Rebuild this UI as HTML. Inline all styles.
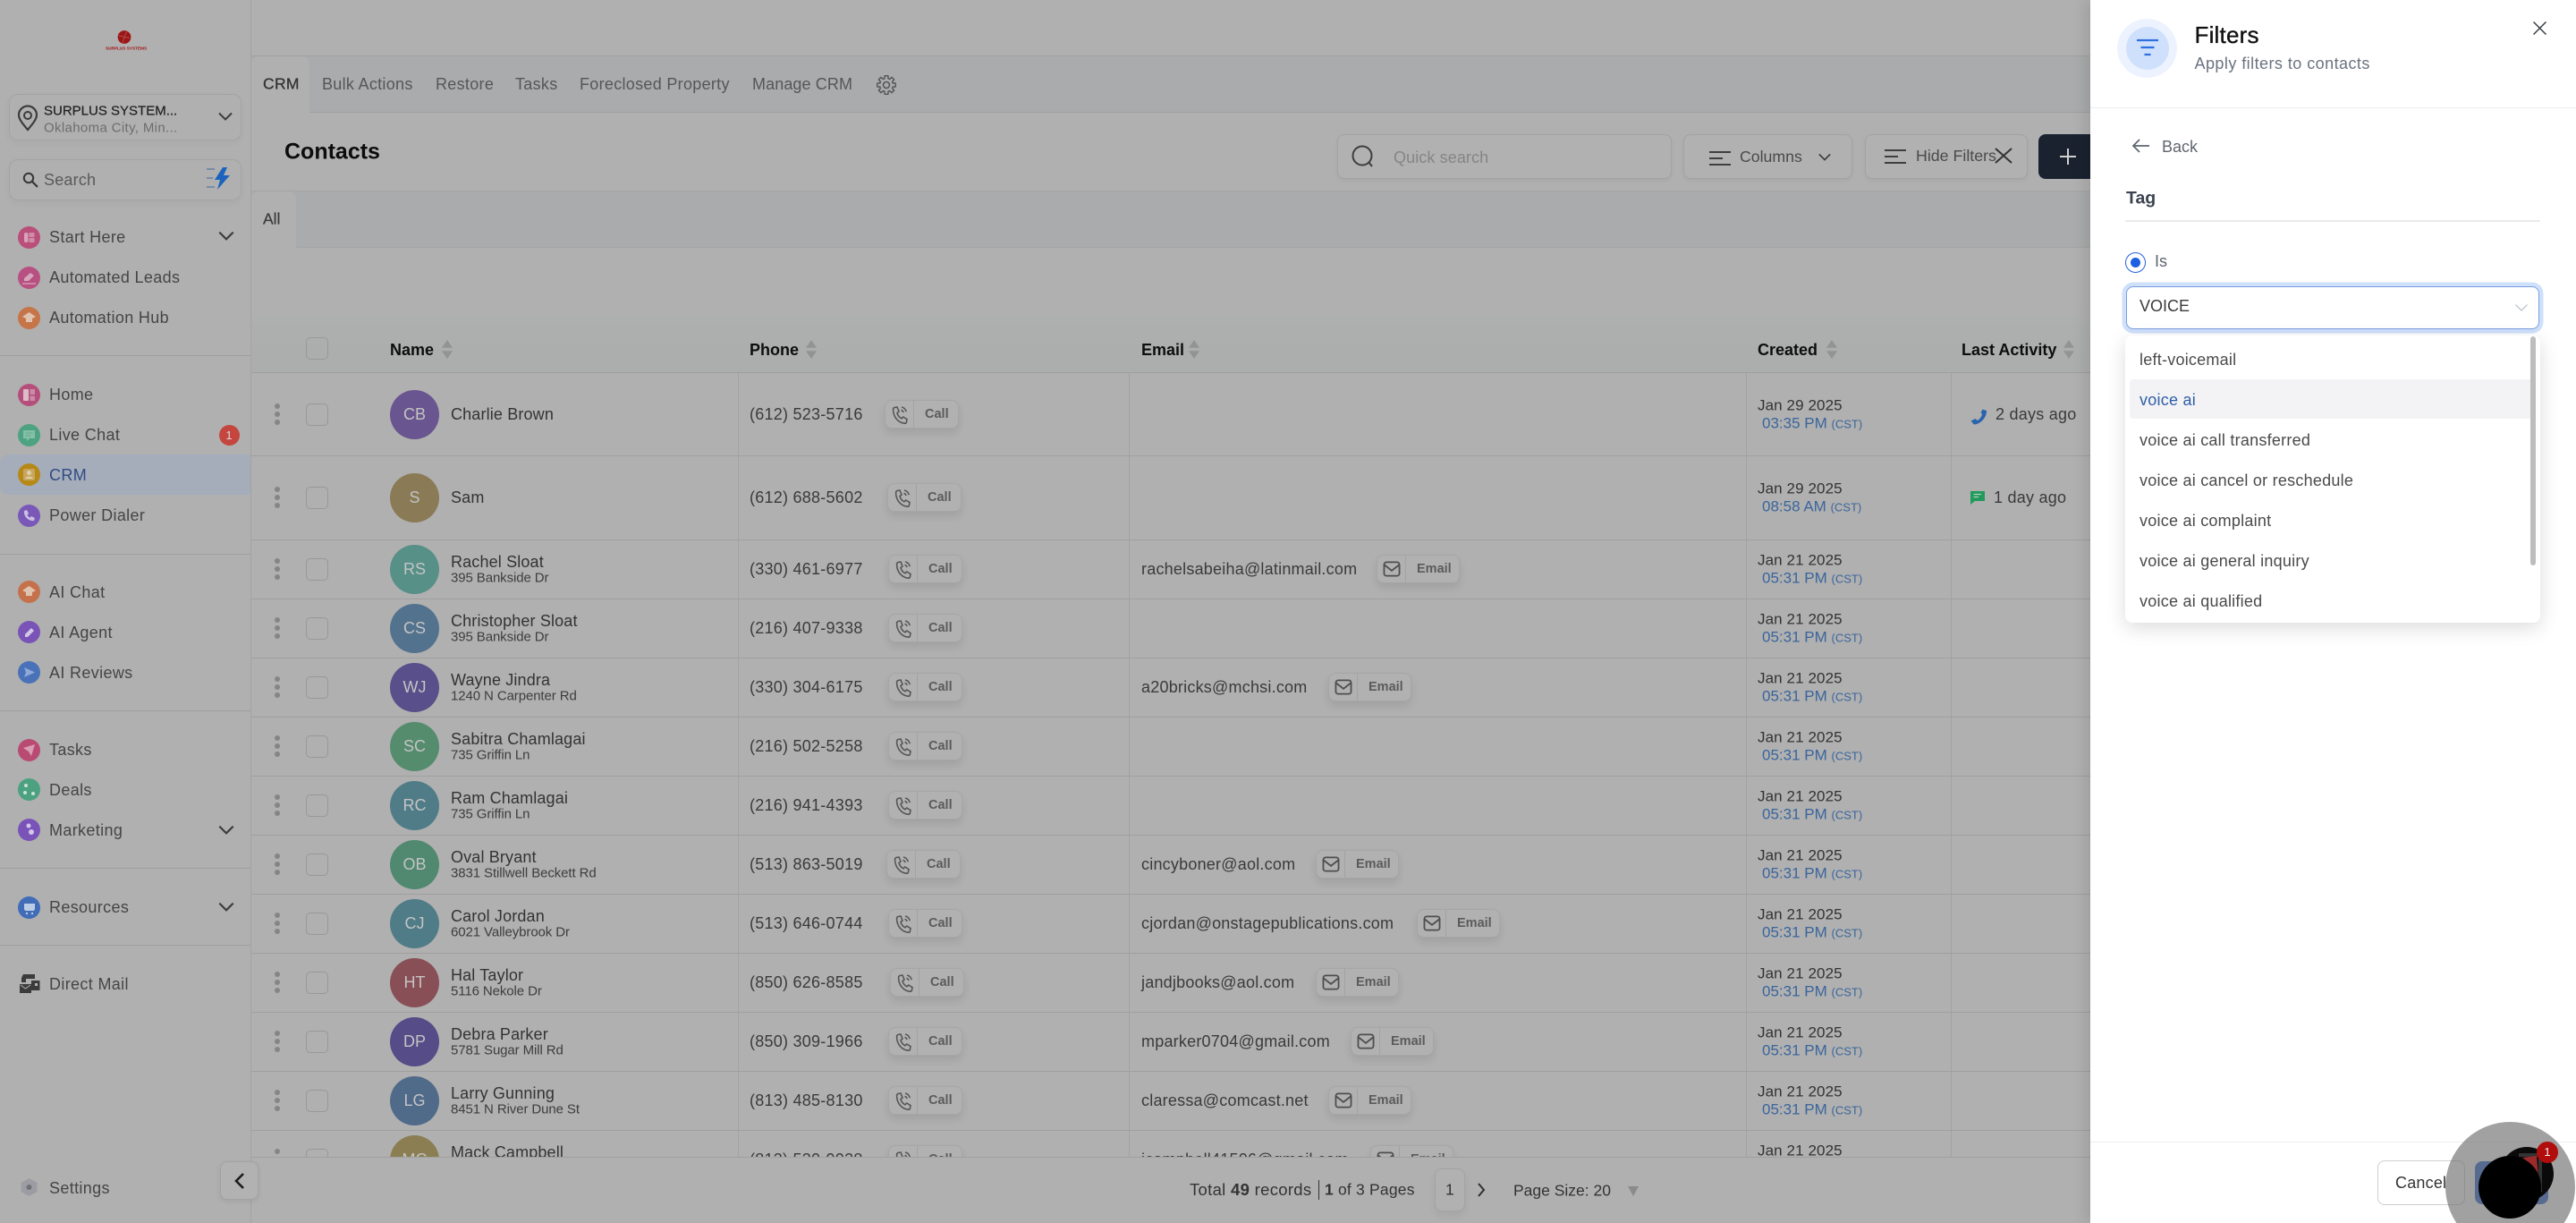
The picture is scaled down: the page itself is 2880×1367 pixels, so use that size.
<!DOCTYPE html>
<html><head><meta charset="utf-8"><title>Contacts</title>
<style>
*{box-sizing:border-box}
html,body{margin:0;padding:0}
body{width:2880px;height:1367px;overflow:hidden;background:#b0b0b0;font-family:"Liberation Sans",sans-serif;position:relative;color:#333}
.a{position:absolute}
.t{position:absolute;white-space:nowrap;transform:translateY(-50%);line-height:1}
.s{font-size:18px;letter-spacing:.35px;color:#454545;left:55px}
.l{position:absolute;background:#9f9f9f;height:1px}
.ic{position:absolute;left:20px;width:25px;height:25px;border-radius:50%;margin-top:-12.5px}
.ic svg{display:block}
.chev{position:absolute;left:244px}
.box{position:absolute;border:1px solid #a3a3a3;border-radius:8px;background:#b1b1b1;box-shadow:0 2px 5px rgba(0,0,0,.05)}
.tab{font-size:18px;letter-spacing:.3px;color:#565656;top:94px}
.h{font-size:18px;font-weight:bold;color:#0d0d0d;top:391px}
.r{position:absolute;left:0;width:2337px;height:0}
.k{position:absolute;left:307px;top:-12px;width:6px;height:6px;border-radius:50%;background:#858585;box-shadow:0 9px 0 #858585,0 18px 0 #858585}
.cb{position:absolute;left:342px;top:-12.5px;width:25px;height:25px;border:1.5px solid #989898;border-radius:5px}
.av{position:absolute;left:436px;top:-27.5px;width:55px;height:55px;border-radius:50%;color:#c4c4c4;font-size:18px;text-align:center;line-height:55px}
.n{left:504px;font-size:18px;letter-spacing:.15px;color:#333;top:0}
.n2{left:504px;font-size:18px;letter-spacing:.15px;color:#333;top:-8.5px}
.ad{left:504px;font-size:15px;letter-spacing:-.1px;color:#3d3d3d;top:10px}
.p{left:838px;font-size:18px;letter-spacing:.25px;color:#3a3a3a;top:0}
.e{left:1276px;font-size:18px;letter-spacing:.22px;color:#3a3a3a;top:0}
.b{position:absolute;height:32px;top:-16px;border:1px solid #a6a6a6;border-radius:8px;background:#b1b1b1;box-shadow:0 5px 9px rgba(0,0,0,.09)}
.b i{position:absolute;top:0;bottom:0;width:1px;background:#a3a3a3}
.b b{position:absolute;top:50%;transform:translateY(-50%);font-size:14.5px;color:#5b5b5b;line-height:1}
.b svg{position:absolute;top:5px;left:6px}
.d{left:1965px;font-size:17px;letter-spacing:.1px;color:#333;top:-10.5px}
.tm{left:1970px;font-size:17px;color:#3a659c;top:10px}
.tm small{font-size:13px}
.o{position:absolute;left:2392px;font-size:18px;letter-spacing:.24px;color:#4a4a4a;white-space:nowrap;transform:translateY(-50%);line-height:1}
</style></head>
<body>
<svg width="0" height="0" style="position:absolute">
<defs>
<symbol id="call" viewBox="0 0 20 22"><path d="M4 2.500 7 2l2 5-2 1.600c.7 2.800 2.500 5 5 6.200l1.700-1.800 4.300 2.600-.6 3.200c-.2 1-1 1.500-2 1.400C8 19.500 2.500 13 2.600 4.500 2.700 3.500 3.200 2.800 4 2.500Z" fill="none" stroke="#565656" stroke-width="1.600"/><path d="M12 2c2.800.6 4.600 2.500 5.200 5.200M11.500 5.400c1.300.4 2.200 1.200 2.600 2.600" fill="none" stroke="#565656" stroke-width="1.500"/></symbol>
<symbol id="mail" viewBox="0 0 22 20"><rect x="1.500" y="1.500" width="19" height="17" rx="3" fill="none" stroke="#4e4e4e" stroke-width="2"/><path d="M2 5l9 7 9-7" fill="none" stroke="#4e4e4e" stroke-width="2"/></symbol>
<symbol id="sort" viewBox="0 0 16 24"><path d="M8 0 15 10H1Z M1 14H15L8 24Z" fill="#939393"/></symbol>
<symbol id="down" viewBox="0 0 16 10"><path d="M1 1.500 8 8.500 15 1.500" fill="none" stroke="#3c3c3c" stroke-width="2"/></symbol>
<symbol id="ham" viewBox="0 0 24 16"><path d="M0 1H24M0 8H15M0 15H24" stroke="#3e3e3e" stroke-width="2" fill="none"/></symbol>
</defs>
</svg>

<!-- main area -->
<div class="a" style="left:280px;top:0;width:1px;height:1367px;background:#a3a3a3"></div>
<div class="a" style="left:281px;top:62px;width:2056px;height:64px;background:#a9abac;border-top:1px solid #a0a0a0;border-bottom:1px solid #a0a0a0"></div>
<div class="a" style="left:281px;top:63px;width:65px;height:63px;background:#b0b0b0;border-radius:8px 8px 0 0"></div>
<div class="t tab" style="left:294px;color:#333;font-size:17.5px;-webkit-text-stroke:.3px #333">CRM</div>
<div class="t tab" style="left:360px">Bulk Actions</div>
<div class="t tab" style="left:487px">Restore</div>
<div class="t tab" style="left:576px">Tasks</div>
<div class="t tab" style="left:648px">Foreclosed Property</div>
<div class="t tab" style="left:841px;letter-spacing:.1px">Manage CRM</div>
<svg class="a" style="left:980px;top:84px" width="22" height="22" viewBox="0 0 22 22"><path d="M9.180.66 12.820.66 13.070 3.790 14.640 4.440 17.020 2.400 19.600 4.980 17.560 7.360 18.210 8.930 21.340 9.180 21.340 12.820 18.210 13.070 17.560 14.640 19.600 17.020 17.020 19.600 14.640 17.560 13.070 18.210 12.820 21.340 9.180 21.340 8.930 18.210 7.360 17.560 4.980 19.600 2.400 17.020 4.440 14.640 3.790 13.070.66 12.820.66 9.180 3.790 8.930 4.440 7.360 2.400 4.980 4.980 2.400 7.360 4.440 8.930 3.790Z" fill="none" stroke="#565656" stroke-width="1.500" stroke-linejoin="round"/><circle cx="11" cy="11" r="3.500" fill="none" stroke="#565656" stroke-width="1.600"/></svg>

<div class="t" style="left:318px;top:169.5px;font-size:25px;font-weight:bold;color:#0c0c0c">Contacts</div>

<div class="box" style="left:1495px;top:150px;width:374px;height:50px"></div>
<svg class="a" style="left:1510px;top:162px" width="27" height="25" viewBox="0 0 27 25"><ellipse cx="13" cy="12" rx="10.500" ry="10.500" fill="none" stroke="#3e3e3e" stroke-width="2"/><path d="M20 19l4 5" stroke="#3e3e3e" stroke-width="2"/></svg>
<div class="t" style="left:1558px;top:176px;font-size:18px;letter-spacing:.1px;color:#858585">Quick search</div>
<div class="box" style="left:1882px;top:150px;width:189px;height:50px"></div>
<svg class="a" style="left:1911px;top:169px" width="24" height="16"><use href="#ham"/></svg>
<div class="t" style="left:1945px;top:176px;font-size:17.700px;color:#4a4a4a">Columns</div>
<svg class="a" style="left:2033px;top:171px" width="14" height="9"><use href="#down"/></svg>
<div class="box" style="left:2085px;top:150px;width:182px;height:50px"></div>
<svg class="a" style="left:2107px;top:167px" width="24" height="16"><use href="#ham"/></svg>
<div class="t" style="left:2142px;top:175px;font-size:17.800px;color:#4a4a4a">Hide Filters</div>
<svg class="a" style="left:2230px;top:165px" width="20" height="18" viewBox="0 0 20 18"><path d="M1 1 19 17M19 1 1 17" stroke="#333" stroke-width="2"/></svg>
<div class="a" style="left:2279px;top:150px;width:70px;height:50px;background:#1a2230;border-radius:8px"></div>
<svg class="a" style="left:2303px;top:166px" width="18" height="18"><path d="M9 0V18M0 9H18" stroke="#d0d0d0" stroke-width="2"/></svg>

<div class="a" style="left:281px;top:213px;width:2056px;height:64px;background:#a9abac;border-top:1px solid #a4a4a4;border-bottom:1px solid #a4a4a4"></div>
<div class="a" style="left:281px;top:214px;width:50px;height:63px;background:#b0b0b0;border-radius:8px 8px 0 0"></div>
<div class="t" style="left:294px;top:245px;font-size:17.5px;color:#3c3c3c;-webkit-text-stroke:.3px #3c3c3c">All</div>

<!-- table header -->
<div class="a" style="left:281px;top:340px;width:2056px;height:77px;background:linear-gradient(#b0b0b0,#adafae 35%,#acaeae)"></div>
<div class="l" style="left:281px;top:416px;width:2056px"></div>
<div class="cb a" style="top:377px"></div>
<div class="t h" style="left:436px">Name</div><svg class="a" style="left:492px;top:380px" width="16" height="21"><use href="#sort"/></svg>
<div class="t h" style="left:838px">Phone</div><svg class="a" style="left:899px;top:380px" width="16" height="21"><use href="#sort"/></svg>
<div class="t h" style="left:1276px">Email</div><svg class="a" style="left:1327px;top:380px" width="16" height="21"><use href="#sort"/></svg>
<div class="t h" style="left:1965px">Created</div><svg class="a" style="left:2040px;top:380px" width="16" height="21"><use href="#sort"/></svg>
<div class="t h" style="left:2193px">Last Activity</div><svg class="a" style="left:2305px;top:380px" width="16" height="21"><use href="#sort"/></svg>

<!-- table body -->
<div class="a" style="left:0;top:0;width:2337px;height:1293px;overflow:hidden">
<div class="a" style="left:825px;top:417px;width:1px;height:876px;background:#a3a3a3"></div>
<div class="a" style="left:1262px;top:417px;width:1px;height:876px;background:#a3a3a3"></div>
<div class="a" style="left:1952px;top:417px;width:1px;height:876px;background:#a3a3a3"></div>
<div class="a" style="left:2181px;top:417px;width:1px;height:876px;background:#a3a3a3"></div>
<div class="l" style="left:281px;width:2056px;top:509px"></div>
<div class="l" style="left:281px;width:2056px;top:603px"></div>
<div class="l" style="left:281px;width:2056px;top:669px"></div>
<div class="l" style="left:281px;width:2056px;top:735px"></div>
<div class="l" style="left:281px;width:2056px;top:801px"></div>
<div class="l" style="left:281px;width:2056px;top:867px"></div>
<div class="l" style="left:281px;width:2056px;top:933px"></div>
<div class="l" style="left:281px;width:2056px;top:999px"></div>
<div class="l" style="left:281px;width:2056px;top:1065px"></div>
<div class="l" style="left:281px;width:2056px;top:1131px"></div>
<div class="l" style="left:281px;width:2056px;top:1197px"></div>
<div class="l" style="left:281px;width:2056px;top:1263px"></div>

<div class="r" style="top:463px"><i class="k"></i><i class="cb"></i><div class="av" style="background:#69558f">CB</div><div class="t n">Charlie Brown</div><div class="t p">(612) 523-5716</div>
<div class="b" style="left:989px;width:83px"><svg width="20" height="22"><use href="#call"/></svg><i style="left:31px"></i><b style="left:44px">Call</b></div>
<div class="t d">Jan 29 2025</div><div class="t tm">03:35 PM <small>(CST)</small></div>
<svg class="a" style="left:2203px;top:-6px" width="19" height="18" viewBox="0 0 19 18"><path d="M13.500.5 18 2c.6 6.500-6 15-14 15.500L.5 13.500 5.500 11l2.200 2c2.500-1.300 4.800-4.300 5.300-7.300l-1.500-1.200Z" fill="#2a64ad"/></svg>
<div class="t" style="left:2231px;top:0;font-size:18px;letter-spacing:.25px;color:#3a3a3a">2 days ago</div></div>

<div class="r" style="top:556px"><i class="k"></i><i class="cb"></i><div class="av" style="background:#8a7a55">S</div><div class="t n">Sam</div><div class="t p">(612) 688-5602</div>
<div class="b" style="left:992px;width:83px"><svg width="20" height="22"><use href="#call"/></svg><i style="left:31px"></i><b style="left:44px">Call</b></div>
<div class="t d">Jan 29 2025</div><div class="t tm">08:58 AM <small>(CST)</small></div>
<svg class="a" style="left:2203px;top:-7px" width="16" height="15" viewBox="0 0 16 15"><path d="M0 0H16V11H5L0 15Z" fill="#219a5b"/><path d="M3.500 3.500H12M3.500 6.500H9" stroke="#b0d0c0" stroke-width="1.300"/></svg>
<div class="t" style="left:2229px;top:0;font-size:18px;letter-spacing:.25px;color:#3a3a3a">1 day ago</div></div>

<div class="r" style="top:636px"><i class="k"></i><i class="cb"></i><div class="av" style="background:#579087">RS</div><div class="t n2">Rachel Sloat</div><div class="t ad">395 Bankside Dr</div><div class="t p">(330) 461-6977</div>
<div class="b" style="left:993px;width:83px"><svg width="20" height="22"><use href="#call"/></svg><i style="left:31px"></i><b style="left:44px">Call</b></div>
<div class="t e">rachelsabeiha@latinmail.com</div>
<div class="b" style="left:1539px;width:93px"><svg width="20" height="18" style="top:6px"><use href="#mail"/></svg><i style="left:31px"></i><b style="left:44px">Email</b></div>
<div class="t d">Jan 21 2025</div><div class="t tm">05:31 PM <small>(CST)</small></div></div>

<div class="r" style="top:702px"><i class="k"></i><i class="cb"></i><div class="av" style="background:#52728d">CS</div><div class="t n2">Christopher Sloat</div><div class="t ad">395 Bankside Dr</div><div class="t p">(216) 407-9338</div>
<div class="b" style="left:993px;width:83px"><svg width="20" height="22"><use href="#call"/></svg><i style="left:31px"></i><b style="left:44px">Call</b></div>
<div class="t d">Jan 21 2025</div><div class="t tm">05:31 PM <small>(CST)</small></div></div>

<div class="r" style="top:768px"><i class="k"></i><i class="cb"></i><div class="av" style="background:#594f8a">WJ</div><div class="t n2">Wayne Jindra</div><div class="t ad">1240 N Carpenter Rd</div><div class="t p">(330) 304-6175</div>
<div class="b" style="left:993px;width:83px"><svg width="20" height="22"><use href="#call"/></svg><i style="left:31px"></i><b style="left:44px">Call</b></div>
<div class="t e">a20bricks@mchsi.com</div>
<div class="b" style="left:1485px;width:93px"><svg width="20" height="18" style="top:6px"><use href="#mail"/></svg><i style="left:31px"></i><b style="left:44px">Email</b></div>
<div class="t d">Jan 21 2025</div><div class="t tm">05:31 PM <small>(CST)</small></div></div>

<div class="r" style="top:834px"><i class="k"></i><i class="cb"></i><div class="av" style="background:#558c6d">SC</div><div class="t n2">Sabitra Chamlagai</div><div class="t ad">735 Griffin Ln</div><div class="t p">(216) 502-5258</div>
<div class="b" style="left:993px;width:83px"><svg width="20" height="22"><use href="#call"/></svg><i style="left:31px"></i><b style="left:44px">Call</b></div>
<div class="t d">Jan 21 2025</div><div class="t tm">05:31 PM <small>(CST)</small></div></div>

<div class="r" style="top:900px"><i class="k"></i><i class="cb"></i><div class="av" style="background:#507c88">RC</div><div class="t n2">Ram Chamlagai</div><div class="t ad">735 Griffin Ln</div><div class="t p">(216) 941-4393</div>
<div class="b" style="left:993px;width:83px"><svg width="20" height="22"><use href="#call"/></svg><i style="left:31px"></i><b style="left:44px">Call</b></div>
<div class="t d">Jan 21 2025</div><div class="t tm">05:31 PM <small>(CST)</small></div></div>

<div class="r" style="top:966px"><i class="k"></i><i class="cb"></i><div class="av" style="background:#508970">OB</div><div class="t n2">Oval Bryant</div><div class="t ad">3831 Stillwell Beckett Rd</div><div class="t p">(513) 863-5019</div>
<div class="b" style="left:991px;width:83px"><svg width="20" height="22"><use href="#call"/></svg><i style="left:31px"></i><b style="left:44px">Call</b></div>
<div class="t e">cincyboner@aol.com</div>
<div class="b" style="left:1471px;width:93px"><svg width="20" height="18" style="top:6px"><use href="#mail"/></svg><i style="left:31px"></i><b style="left:44px">Email</b></div>
<div class="t d">Jan 21 2025</div><div class="t tm">05:31 PM <small>(CST)</small></div></div>

<div class="r" style="top:1032px"><i class="k"></i><i class="cb"></i><div class="av" style="background:#4f7c87">CJ</div><div class="t n2">Carol Jordan</div><div class="t ad">6021 Valleybrook Dr</div><div class="t p">(513) 646-0744</div>
<div class="b" style="left:993px;width:83px"><svg width="20" height="22"><use href="#call"/></svg><i style="left:31px"></i><b style="left:44px">Call</b></div>
<div class="t e">cjordan@onstagepublications.com</div>
<div class="b" style="left:1584px;width:93px"><svg width="20" height="18" style="top:6px"><use href="#mail"/></svg><i style="left:31px"></i><b style="left:44px">Email</b></div>
<div class="t d">Jan 21 2025</div><div class="t tm">05:31 PM <small>(CST)</small></div></div>

<div class="r" style="top:1098px"><i class="k"></i><i class="cb"></i><div class="av" style="background:#884f56">HT</div><div class="t n2">Hal Taylor</div><div class="t ad">5116 Nekole Dr</div><div class="t p">(850) 626-8585</div>
<div class="b" style="left:995px;width:83px"><svg width="20" height="22"><use href="#call"/></svg><i style="left:31px"></i><b style="left:44px">Call</b></div>
<div class="t e">jandjbooks@aol.com</div>
<div class="b" style="left:1471px;width:93px"><svg width="20" height="18" style="top:6px"><use href="#mail"/></svg><i style="left:31px"></i><b style="left:44px">Email</b></div>
<div class="t d">Jan 21 2025</div><div class="t tm">05:31 PM <small>(CST)</small></div></div>

<div class="r" style="top:1164px"><i class="k"></i><i class="cb"></i><div class="av" style="background:#554c88">DP</div><div class="t n2">Debra Parker</div><div class="t ad">5781 Sugar Mill Rd</div><div class="t p">(850) 309-1966</div>
<div class="b" style="left:993px;width:83px"><svg width="20" height="22"><use href="#call"/></svg><i style="left:31px"></i><b style="left:44px">Call</b></div>
<div class="t e">mparker0704@gmail.com</div>
<div class="b" style="left:1510px;width:93px"><svg width="20" height="18" style="top:6px"><use href="#mail"/></svg><i style="left:31px"></i><b style="left:44px">Email</b></div>
<div class="t d">Jan 21 2025</div><div class="t tm">05:31 PM <small>(CST)</small></div></div>

<div class="r" style="top:1230px"><i class="k"></i><i class="cb"></i><div class="av" style="background:#506a89">LG</div><div class="t n2">Larry Gunning</div><div class="t ad">8451 N River Dune St</div><div class="t p">(813) 485-8130</div>
<div class="b" style="left:993px;width:83px"><svg width="20" height="22"><use href="#call"/></svg><i style="left:31px"></i><b style="left:44px">Call</b></div>
<div class="t e">claressa@comcast.net</div>
<div class="b" style="left:1485px;width:93px"><svg width="20" height="18" style="top:6px"><use href="#mail"/></svg><i style="left:31px"></i><b style="left:44px">Email</b></div>
<div class="t d">Jan 21 2025</div><div class="t tm">05:31 PM <small>(CST)</small></div></div>

<div class="r" style="top:1296px"><i class="k"></i><i class="cb"></i><div class="av" style="background:#8a7e52">MC</div><div class="t n2">Mack Campbell</div><div class="t ad">123 Main St</div><div class="t p">(813) 530-9038</div>
<div class="b" style="left:993px;width:83px"><svg width="20" height="22"><use href="#call"/></svg><i style="left:31px"></i><b style="left:44px">Call</b></div>
<div class="t e">jcampbell41506@gmail.com</div>
<div class="b" style="left:1532px;width:93px"><svg width="20" height="18" style="top:6px"><use href="#mail"/></svg><i style="left:31px"></i><b style="left:44px">Email</b></div>
<div class="t d">Jan 21 2025</div><div class="t tm">05:31 PM <small>(CST)</small></div></div>
</div>

<!-- pagination -->
<div class="l" style="left:281px;top:1293px;width:2056px"></div>
<div class="t" style="left:1330px;top:1330px;font-size:18.500px;letter-spacing:.3px;color:#333">Total <b>49</b> records</div>
<div class="a" style="left:1474px;top:1319px;width:1px;height:22px;background:#333"></div>
<div class="t" style="left:1481px;top:1330px;font-size:17.500px;letter-spacing:.2px;color:#333"><b>1</b> of 3 Pages</div>
<div class="box" style="left:1604px;top:1306px;width:34px;height:48px;box-shadow:0 5px 9px rgba(0,0,0,.06)"></div>
<div class="t" style="left:1616px;top:1330px;font-size:17.500px;color:#333">1</div>
<svg class="a" style="left:1651px;top:1322px" width="10" height="16"><path d="M2 1 8 8 2 15" fill="none" stroke="#2f2f2f" stroke-width="2"/></svg>
<div class="t" style="left:1692px;top:1331px;font-size:17.500px;color:#333">Page Size: 20</div>
<svg class="a" style="left:1820px;top:1326px" width="12" height="11"><path d="M0 0H12L6 11Z" fill="#8b8b8b"/></svg>

<!-- sidebar -->
<div class="a" style="left:10px;top:105px;width:260px;height:52px;border:1px solid #a4a4a4;border-radius:10px;box-shadow:0 3px 8px rgba(0,0,0,.04)"></div>
<svg class="a" style="left:19px;top:117px" width="24" height="30" viewBox="0 0 24 30"><path d="M12 28C6 21 2 16 2 11.500A10 10 0 0 1 22 11.500C22 16 18 21 12 28Z" fill="none" stroke="#3c3c3c" stroke-width="2.200"/><circle cx="12" cy="12" r="4" fill="none" stroke="#3c3c3c" stroke-width="2"/></svg>
<div class="t" style="left:49px;top:123.5px;font-size:15px;color:#222;-webkit-text-stroke:.2px #222">SURPLUS SYSTEM...</div>
<div class="t" style="left:49px;top:143px;font-size:15px;letter-spacing:.35px;color:#6d6d6d">Oklahoma City, Min...</div>
<svg class="a" style="left:244px;top:125px" width="16" height="10"><use href="#down"/></svg>
<div class="a" style="left:10px;top:178px;width:260px;height:46px;border:1px solid #a4a4a4;border-radius:10px;box-shadow:0 3px 8px rgba(0,0,0,.04)"></div>
<svg class="a" style="left:25px;top:192px" width="18" height="18" viewBox="0 0 18 18"><circle cx="7" cy="7" r="5.200" fill="none" stroke="#363636" stroke-width="2"/><path d="M11 11l6 6" stroke="#363636" stroke-width="2.200"/></svg>
<div class="t" style="left:49px;top:201px;font-size:18px;letter-spacing:.2px;color:#5a5a5a">Search</div>
<svg class="a" style="left:230px;top:186px" width="29" height="27" viewBox="0 0 29 27"><path d="M1 3H10M1 13H8M1 23H10" stroke="#6f86a8" stroke-width="1.800"/><path d="M19 1 10 15H16L13 26 27 10H20L24 1Z" fill="#1c63bd"/></svg>

<!-- logo -->
<svg class="a" style="left:131px;top:33px" width="16" height="17" viewBox="0 0 18 18"><circle cx="9" cy="9" r="8.300" fill="#9e1516"/><path d="M9 9 12 2M9 9l7 1M9 9l-2 7M9 9 2 7" stroke="#a55" stroke-width="1"/></svg>
<div class="t" style="left:118px;top:55px;font-size:4.700px;font-weight:bold;color:#a01213">SURPLUS SYSTEMS</div>

<div class="a" style="left:0;top:508px;width:280px;height:45px;background:#a5adba;border-radius:10px 0 0 10px"></div>

<div class="ic" style="top:265px;background:#b94f7a"><svg width="25" height="25"><rect x="7" y="7" width="4.500" height="11" rx="2" fill="#d6a3b8"/><rect x="12.500" y="7" width="6" height="5" fill="#cf8ca8"/><rect x="12.500" y="13" width="6" height="5" fill="#cf8ca8"/></svg></div><div class="t s" style="top:265px">Start Here</div><svg class="chev" style="top:258px" width="18" height="11"><use href="#down"/></svg>
<div class="ic" style="top:310px;background:#b85081"><svg width="25" height="25"><path d="M7 13 14 7l4 3-6 6H7Z" fill="#d6a6bc"/><path d="M5 19H20" stroke="#d6a6bc" stroke-width="1.300"/></svg></div><div class="t s" style="top:310px">Automated Leads</div>
<div class="ic" style="top:355px;background:#c67549"><svg width="25" height="25"><path d="M12.500 6 20 11l-4 2v4h-7v-4l-4-2Z" fill="#dfc3af"/></svg></div><div class="t s" style="top:355px">Automation Hub</div>
<div class="l" style="left:0;top:397px;width:280px"></div>

<div class="ic" style="top:441px;background:#b44f7b"><svg width="25" height="25"><rect x="6" y="6" width="6" height="13" rx="1" fill="#dcbccb"/><rect x="13.500" y="6" width="5.500" height="6" fill="#c98ba6"/><rect x="13.500" y="13.500" width="5.500" height="5.500" fill="#c98ba6"/></svg></div><div class="t s" style="top:441px">Home</div>
<div class="ic" style="top:486px;background:#4ca281"><svg width="25" height="25"><path d="M6 7H19V16H13L10 19V16H6Z" fill="#85bfa8"/><path d="M8.500 10H16.500M8.500 13H14" stroke="#60a88c" stroke-width="1"/></svg></div><div class="t s" style="top:486px">Live Chat</div>
<div class="a" style="left:244.500px;top:474.500px;width:23px;height:23px;border-radius:50%;background:#c4463e;color:#d9d9d9;font-size:13px;text-align:center;line-height:23px">1</div>
<div class="ic" style="top:530.500px;background:#b68818"><svg width="25" height="25"><rect x="6" y="6" width="13" height="13" rx="2" fill="#c7a75e"/><circle cx="12.500" cy="10.500" r="2.500" fill="#e0d1ab"/><path d="M8 17c1-3 8-3 9 0Z" fill="#e0d1ab"/></svg></div><div class="t s" style="top:530.500px;color:#2f4a84">CRM</div>
<div class="ic" style="top:576px;background:#7958b8"><svg width="25" height="25"><path d="M7 7l3-1 2 4-1.500 1.500c.7 1.500 1.700 2.500 3 3L15 13l4 2-1 3c-6 1-12-5-11-11Z" fill="#cabde2"/></svg></div><div class="t s" style="top:576px">Power Dialer</div>
<div class="l" style="left:0;top:619px;width:280px"></div>

<div class="ic" style="top:661.500px;background:#c5714b"><svg width="25" height="25"><path d="M12.500 6 20 11l-4 2v4h-7v-4l-4-2Z" fill="#dfc3af"/></svg></div><div class="t s" style="top:661.500px">AI Chat</div>
<div class="ic" style="top:706.500px;background:#7953b6"><svg width="25" height="25"><path d="M8 15 15 8l3 3-7 7H8Z" fill="#d3c7e8"/></svg></div><div class="t s" style="top:706.500px">AI Agent</div>
<div class="ic" style="top:751.500px;background:#4972b8"><svg width="25" height="25"><path d="M7 7 19 12.500 7 18 9 12.500Z" fill="#8fa9d8"/></svg></div><div class="t s" style="top:751.500px">AI Reviews</div>
<div class="l" style="left:0;top:794px;width:280px"></div>

<div class="ic" style="top:838px;background:#b94b72"><svg width="25" height="25"><path d="M6 10 19 6 15 19 12 14Z" fill="#d99eb3"/></svg></div><div class="t s" style="top:838px">Tasks</div>
<div class="ic" style="top:882.500px;background:#4ba180"><svg width="25" height="25"><circle cx="9" cy="8" r="2" fill="#cbe2d8"/><circle cx="8" cy="16" r="2" fill="#cbe2d8"/><circle cx="17" cy="17" r="2" fill="#cbe2d8"/></svg></div><div class="t s" style="top:882.500px">Deals</div>
<div class="ic" style="top:927.500px;background:#7953b8"><svg width="25" height="25"><circle cx="12" cy="8" r="2.500" fill="#d3c7e8"/><circle cx="15" cy="15" r="3" fill="#d3c7e8"/></svg></div><div class="t s" style="top:927.500px">Marketing</div><svg class="chev" style="top:922px" width="18" height="11"><use href="#down"/></svg>
<div class="l" style="left:0;top:970px;width:280px"></div>

<div class="ic" style="top:1014px;background:#406cb8"><svg width="25" height="25"><path d="M7 8H19V14C19 15 18 16 17 16H9C8 16 7 15 7 14Z" fill="#bccce6"/><circle cx="10" cy="19" r="1.200" fill="#bccce6"/><circle cx="16" cy="19" r="1.200" fill="#bccce6"/></svg></div><div class="t s" style="top:1014px">Resources</div><svg class="chev" style="top:1008px" width="18" height="11"><use href="#down"/></svg>
<div class="l" style="left:0;top:1056px;width:280px"></div>

<svg class="a" style="left:21px;top:1088px" width="24" height="23" viewBox="0 0 24 23"><path d="M5 1H18V6H8V10H3V5Z" fill="#3b3b3b"/><rect x="1" y="12" width="13" height="10" fill="#3b3b3b"/><path d="M2 13l5.500 4L13 13" stroke="#b0b0b0" fill="none"/><rect x="14" y="8" width="9.500" height="11" fill="#3b3b3b"/><rect x="18" y="11" width="3" height="3" fill="#b0b0b0"/></svg>
<div class="t s" style="top:1100px">Direct Mail</div>

<svg class="a" style="left:22px;top:1316px" width="21" height="22" viewBox="0 0 21 22"><path d="M10.500 1 19.500 6V16L10.500 21 1.500 16V6Z" fill="#9c9ca3"/><circle cx="10.500" cy="11" r="3" fill="#6f6f75"/></svg>
<div class="t s" style="top:1328px">Settings</div>
<div class="a" style="left:246px;top:1298px;width:43px;height:43px;background:#b2b2b2;border:1px solid #a3a3a3;border-radius:8px;box-shadow:0 2px 6px rgba(0,0,0,.08)"></div>
<svg class="a" style="left:261px;top:1311px" width="13" height="18"><path d="M11 1 3 9l8 8" fill="none" stroke="#1c1c1c" stroke-width="2.600"/></svg>

<!-- filters panel -->
<div class="a" style="left:2337px;top:0;width:543px;height:1367px;background:#fff;box-shadow:-6px 0 14px rgba(0,0,0,.1)"></div>
<div class="a" style="left:2367px;top:21px;width:67px;height:66px;border-radius:50%;background:#edf3fe"></div>
<div class="a" style="left:2377px;top:30px;width:48px;height:48px;border-radius:50%;background:#cfe0fd"></div>
<svg class="a" style="left:2388px;top:43px" width="26" height="22"><path d="M1 2H25M5.500 10H20.500M9.500 18H16.500" stroke="#2f6fde" stroke-width="2.200"/></svg>
<div class="t" style="left:2453.500px;top:39px;font-size:26px;letter-spacing:.2px;color:#111;-webkit-text-stroke:.35px #111">Filters</div>
<div class="t" style="left:2453.500px;top:70.5px;font-size:18px;letter-spacing:.45px;color:#6b7280">Apply filters to contacts</div>
<svg class="a" style="left:2832px;top:24px" width="15" height="15"><path d="M.5.500 14.500 14.500M14.500.500.500 14.500" stroke="#3a3f47" stroke-width="1.500"/></svg>
<div class="a" style="left:2337px;top:120px;width:543px;height:1px;background:#eceef0"></div>

<svg class="a" style="left:2384px;top:155px" width="19" height="16"><path d="M8 1 1 8l7 7M1 8H19" fill="none" stroke="#5f6670" stroke-width="1.700"/></svg>
<div class="t" style="left:2417px;top:164px;font-size:18px;color:#5f6670">Back</div>
<div class="t" style="left:2377px;top:222px;font-size:19.500px;font-weight:bold;color:#3c4350">Tag</div>
<div class="a" style="left:2376px;top:246px;width:464px;height:2px;background:#ebebeb"></div>
<div class="a" style="left:2376px;top:282px;width:23px;height:23px;border:1.500px solid #2563d9;border-radius:50%"></div>
<div class="a" style="left:2382px;top:288px;width:11px;height:11px;background:#1c5fe0;border-radius:50%"></div>
<div class="t" style="left:2409px;top:292px;font-size:18px;color:#5c6470">Is</div>

<div class="a" style="left:2377px;top:320px;width:462px;height:48px;border:1.500px solid #7a9fe0;border-radius:8px;background:#fff;box-shadow:0 0 0 4.500px #cfe0fb"></div>
<div class="t" style="left:2392px;top:342px;font-size:18px;color:#3a3a3a">VOICE</div>
<svg class="a" style="left:2812px;top:340px" width="14" height="8"><path d="M.5.500 7 7 13.500.500" fill="none" stroke="#b8bcc2" stroke-width="1.200"/></svg>

<div class="a" style="left:2376px;top:375px;width:464px;height:321px;background:#fff;border-radius:8px;box-shadow:0 6px 22px rgba(0,0,0,.14)"></div>
<div class="a" style="left:2381px;top:424px;width:453px;height:44px;background:#f3f3f5;border-radius:4px"></div>
<div class="a" style="left:2829px;top:376px;width:5.500px;height:256px;background:#bdbdbd;border-radius:3px"></div>
<div class="o" style="top:401.500px">left-voicemail</div>
<div class="o" style="top:446.500px;color:#2f5ea8">voice ai</div>
<div class="o" style="top:491.500px">voice ai call transferred</div>
<div class="o" style="top:536.500px">voice ai cancel or reschedule</div>
<div class="o" style="top:581.500px">voice ai complaint</div>
<div class="o" style="top:626.500px">voice ai general inquiry</div>
<div class="o" style="top:671.500px">voice ai qualified</div>

<div class="a" style="left:2337px;top:1276px;width:543px;height:1px;background:#eceef0"></div>
<div class="a" style="left:2658px;top:1297px;width:98px;height:50px;border:1px solid #cfcfcf;border-radius:8px;background:#fff"></div>
<div class="t" style="left:2678px;top:1322px;font-size:18px;letter-spacing:.2px;color:#333">Cancel</div>
<div class="a" style="left:2767px;top:1298px;width:82px;height:48px;background:#2d66cf;border-radius:8px"></div>

<!-- widget -->
<div class="a" style="left:2734px;top:1254px;width:146px;height:113px;overflow:hidden">
<div class="a" style="left:0;top:0;width:145px;height:145px;border-radius:50%;background:rgba(110,110,110,.65)"></div>
</div>
<svg class="a" style="left:2770px;top:1280px" width="90" height="87" viewBox="0 0 90 87"><circle cx="55" cy="32" r="30" fill="#0a0a0a"/><path d="M46 11H70V52" fill="none" stroke="#333" stroke-width="4"/><path d="M50 14 66 12 68 36 58 20Z" fill="#9d2a2a"/><circle cx="36" cy="47" r="35" fill="#000"/></svg>
<div class="a" style="left:2836px;top:1276px;width:24px;height:24px;border-radius:50%;background:#b10d0d;color:#eee;font-size:13px;text-align:center;line-height:24px">1</div>
</body></html>
